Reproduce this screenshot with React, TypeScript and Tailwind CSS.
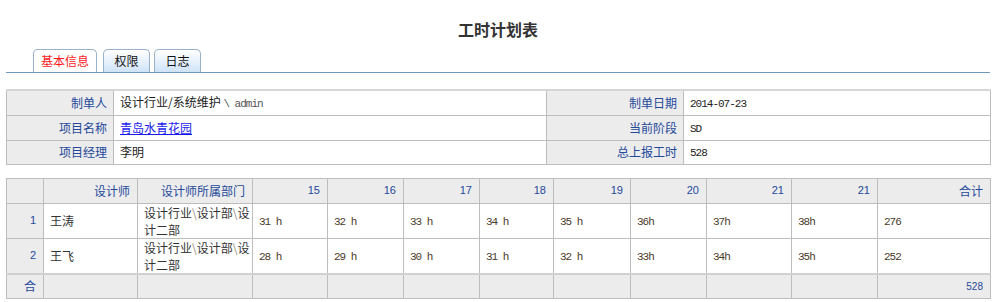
import React from "react";

const cjk = "font-['Noto_Sans_CJK_SC','Noto_Sans',sans-serif]";
const mono = "font-['Liberation_Mono','Noto_Sans_CJK_SC',monospace] text-[11px] tracking-[-1px]";

const days = ["15", "16", "17", "18", "19", "20", "21", "21"];
const widths = [37, 94, 115, 75, 76, 76, 74, 77, 76, 85, 86, 113];

const rows = [
  { no: 1, name: "王涛", hours: ["31 h", "32 h", "33 h", "34 h", "35 h", "36h", "37h", "38h"], total: "276" },
  { no: 2, name: "王飞", hours: ["28 h", "29 h", "30 h", "31 h", "32 h", "33h", "34h", "35h"], total: "252" },
];

// department path, wrapped the way the cell wraps it
function Dept() {
  return (
    <div className="leading-[17px]">
      <div className="whitespace-nowrap">
        设计行业<span className="text-[#9a8a7a]">\</span>设计部<span className="text-[#9a8a7a]">\</span>设
      </div>
      <div>计二部</div>
    </div>
  );
}

export default function App() {
  const label = "bg-[#ececec] border border-[#bdbdbd] text-right pr-[6px] text-[#24489a] p-0";
  const value = "bg-white border border-[#bdbdbd] pl-[6px] text-[#222] p-0";
  const head = "bg-[#ececec] border border-[#bdbdbd] text-right pr-[7px] text-[#24489a] p-0";
  const cell = "bg-white border border-[#bdbdbd] pl-[6px] text-[#333] p-0";

  return (
    <div className={`${cjk} text-[12px] bg-white w-[996px] h-[302px] overflow-hidden`}>
      <div className="h-[49px] pt-[18px] text-center">
        <h1 className="text-[16px] font-bold leading-[22px] text-[#333]">工时计划表</h1>
      </div>

      <div className="mx-[6px] border-b border-[#6f97bf] pl-[27px] flex items-end h-[24px]">
        <div className="w-[64px] h-[23px] mr-[6px] rounded-t-[5px] border border-b-0 border-[#98b2cc] bg-white text-[#ff1a1a] flex items-center justify-center">
          基本信息
        </div>
        <div className="w-[47px] h-[23px] mr-[4px] rounded-t-[5px] border border-b-0 border-[#98b2cc] bg-gradient-to-b from-white to-[#cfe3f8] text-[#111] flex items-center justify-center">
          权限
        </div>
        <div className="w-[47px] h-[23px] rounded-t-[5px] border border-b-0 border-[#98b2cc] bg-gradient-to-b from-white to-[#cfe3f8] text-[#111] flex items-center justify-center">
          日志
        </div>
      </div>

      <table className="ml-[6px] mt-[16px] w-[984px] table-fixed border-collapse border-t-2 border-t-[#d6d6d6]">
        <colgroup>
          <col className="w-[107px]" />
          <col className="w-[433px]" />
          <col className="w-[137px]" />
          <col className="w-[307px]" />
        </colgroup>
        <tbody>
          <tr className="h-[25px]">
            <td className={label}>制单人</td>
            <td className={value}>
              设计行业/系统维护 <span className={`${mono} text-[#555]`}>\ admin</span>
            </td>
            <td className={label}>制单日期</td>
            <td className={value}>
              <span className={mono}>2014-07-23</span>
            </td>
          </tr>
          <tr className="h-[25px]">
            <td className={label}>项目名称</td>
            <td className={value}>
              <a href="#" className="text-[#1a1aee] underline">青岛水青花园</a>
            </td>
            <td className={label}>当前阶段</td>
            <td className={value}>
              <span className={mono}>SD</span>
            </td>
          </tr>
          <tr className="h-[24px]">
            <td className={label}>项目经理</td>
            <td className={value}>李明</td>
            <td className={label}>总上报工时</td>
            <td className={value}>
              <span className={mono}>528</span>
            </td>
          </tr>
        </tbody>
      </table>

      <table className="ml-[6px] mt-[13px] w-[984px] table-fixed border-collapse">
        <colgroup>
          {widths.map((w, i) => (
            <col key={i} style={{ width: w }} />
          ))}
        </colgroup>
        <thead>
          <tr className="h-[25px]">
            <th className={`${head} font-normal`}></th>
            <th className={`${head} font-normal`}>设计师</th>
            <th className={`${head} font-normal`}>设计师所属部门</th>
            {days.map((d, i) => (
              <th key={i} className={`${head} font-normal font-['Liberation_Sans',sans-serif] text-[11px] text-[#3a5aa8]`}>
                {d}
              </th>
            ))}
            <th className={`${head} font-normal`}>合计</th>
          </tr>
        </thead>
        <tbody>
          {rows.map((r) => (
            <tr key={r.no} className="h-[35px]">
              <td className={`${head} font-['Liberation_Sans',sans-serif] text-[11px] text-[#3a5aa8] pr-[5px]`}>{r.no}</td>
              <td className={cell}>{r.name}</td>
              <td className={`${cell} text-[#222]`}>
                <Dept />
              </td>
              {r.hours.map((h, i) => (
                <td key={i} className={cell}>
                  <span className={`${mono} text-[#4a3a2a]`}>{h}</span>
                </td>
              ))}
              <td className={cell}>
                <span className={`${mono} text-[#4a3a2a]`}>{r.total}</span>
              </td>
            </tr>
          ))}
          <tr className="h-[25px] border-t-2 border-t-[#d0d0d0]">
            <td className={`${head} text-[#1f48b8]`}>合</td>
            {Array.from({ length: 10 }).map((_, i) => (
              <td key={i} className={head}></td>
            ))}
            <td className={`${head} font-['Liberation_Sans',sans-serif] text-[10px] text-[#3a5aa8]`}>528</td>
          </tr>
        </tbody>
      </table>
    </div>
  );
}
